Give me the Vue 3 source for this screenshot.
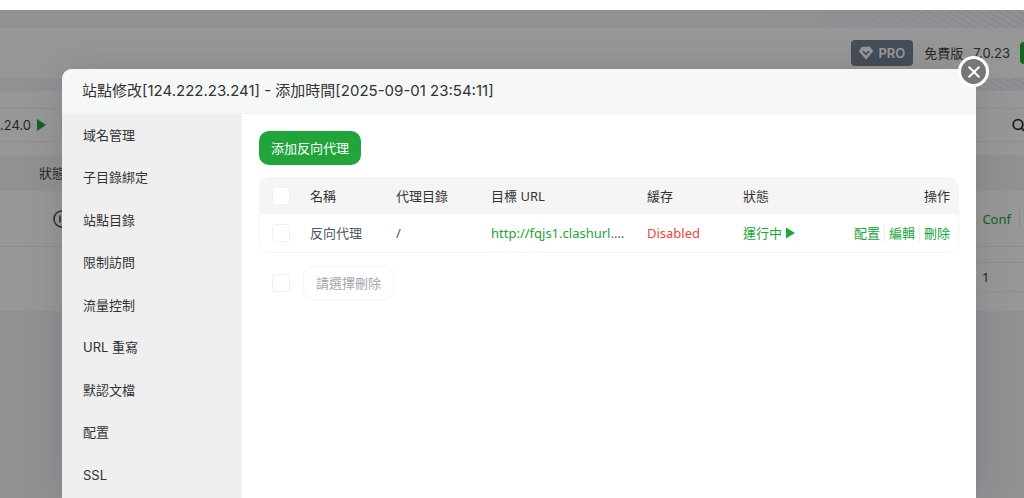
<script setup>
import { ref } from 'vue'

const menu = ['域名管理', '子目錄綁定', '站點目錄', '限制訪問', '流量控制', 'URL 重寫', '默認文檔', '配置', 'SSL']
const rows = ref([
  { name: '反向代理', dir: '/', url: 'http://fqjs1.clashurl.', cache: 'Disabled', state: '運行中', checked: false },
])
const all = ref(false)
const batch = ref(false)
</script>

<template>
  <div class="page">
    <div class="strip"></div>
    <div class="app">
      <header class="topbar">
        <button class="pro" type="button">
          <svg width="14" height="14" viewBox="0 0 14 14" aria-hidden="true">
            <path d="M3.2 1h7.6L14 5.2 7 13.2 0 5.2z" fill="#fff" stroke="#fff" stroke-linejoin="round" stroke-width=".6" />
            <path d="M4.4 5.6l2.6 2.8 2.6-2.8" fill="none" stroke="#768296" stroke-width="1.6" stroke-linecap="round" stroke-linejoin="round" />
          </svg>
          PRO
        </button>
        <span class="edition">免費版</span>
        <span class="version">7.0.23</span>
        <span class="update"></span>
      </header>

      <main class="panel">
        <div class="tools">
          <div class="php">.24.0
            <svg width="9" height="12" viewBox="0 0 9 12" aria-hidden="true"><path d="M0 0l9 6-9 6z" fill="#20a53a" /></svg>
          </div>
          <div class="search">
            <svg width="18" height="14" viewBox="0 0 18 14" aria-hidden="true">
              <circle cx="6" cy="6.5" r="4.8" fill="none" stroke="#333" stroke-width="1.8" />
              <path d="M9.5 10l3.5 3.5" stroke="#333" stroke-width="1.8" />
            </svg>
          </div>
        </div>
        <div class="bg-head">狀態</div>
        <div class="bg-row">
          <svg width="18" height="18" viewBox="0 0 18 18" aria-hidden="true">
            <circle cx="9" cy="9" r="8" fill="none" stroke="#444c5c" stroke-width="1.5" />
            <path d="M7 5.5v7M11 5.5v7" stroke="#444c5c" stroke-width="1.6" />
          </svg>
          <a class="conf" href="#">Conf</a>
        </div>
        <div class="pager"><span class="page-no">1</span></div>
      </main>

      <div class="shade">
        <section class="dialog" role="dialog" aria-labelledby="dialog-title">
          <button class="close" type="button" aria-label="關閉">
            <svg width="12" height="12" viewBox="0 0 12 12" aria-hidden="true">
              <path d="M1.2 1.2l9.6 9.6M10.8 1.2L1.2 10.8" stroke="#fff" stroke-width="2" stroke-linecap="round" />
            </svg>
          </button>
          <h1 id="dialog-title" class="title">站點修改[124.222.23.241] - 添加時間[2025-09-01 23:54:11]</h1>
          <div class="body">
            <nav class="side">
              <a v-for="item in menu" :key="item" href="#">{{ item }}</a>
            </nav>
            <div class="content">
              <button class="add" type="button">添加反向代理</button>
              <div class="table-box">
                <table>
                  <colgroup>
                    <col class="c-check"><col class="c-name"><col class="c-dir"><col class="c-url"><col class="c-cache"><col class="c-state"><col>
                  </colgroup>
                  <thead>
                    <tr>
                      <th><input v-model="all" type="checkbox" aria-label="全選"></th>
                      <th>名稱</th>
                      <th>代理目錄</th>
                      <th>目標 URL</th>
                      <th>緩存</th>
                      <th>狀態</th>
                      <th class="ops">操作</th>
                    </tr>
                  </thead>
                  <tbody>
                    <tr v-for="row in rows" :key="row.name">
                      <td><input v-model="row.checked" type="checkbox" :aria-label="row.name"></td>
                      <td>{{ row.name }}</td>
                      <td>{{ row.dir }}</td>
                      <td><a href="#">{{ row.url }}</a>…</td>
                      <td><a class="off" href="#">{{ row.cache }}</a></td>
                      <td>
                        <a class="run" href="#">{{ row.state }}
                          <svg width="9" height="12" viewBox="0 0 9 12" aria-hidden="true"><path d="M0 .5L9 6l-9 5.5z" fill="#20a53a" /></svg>
                        </a>
                      </td>
                      <td class="ops">
                        <div class="links"><a href="#">配置</a><a href="#">編輯</a><a href="#">刪除</a></div>
                      </td>
                    </tr>
                  </tbody>
                </table>
              </div>
              <div class="batch">
                <input v-model="batch" type="checkbox" aria-label="批量選擇">
                <button class="del" type="button" disabled>請選擇刪除</button>
              </div>
            </div>
          </div>
        </section>
      </div>
    </div>
  </div>
</template>

<style>
body { margin: 0; }
</style>

<style scoped>
* { box-sizing: border-box; }
.page {
  display: flex;
  flex-direction: column;
  height: 100vh;
  overflow: hidden;
  font-family: "Noto Sans", "Noto Sans CJK TC", sans-serif;
  font-size: 13px;
  line-height: 20px;
  color: #444;
}
a { text-decoration: none; color: #20a53a; }
button { font: inherit; border: 0; cursor: pointer; }
.strip { flex: none; height: 10px; background: #fff; }
.app {
  position: relative;
  flex: 1;
  min-height: 0;
  padding-top: 18px;
  background:
    linear-gradient(90deg, #f0f2f5 75%, transparent) 0 0 / 100% 90px no-repeat,
    repeating-linear-gradient(30deg, #e2e4ef 0 1px, #f0f2f5 2px 5px) 0 0 / 100% 90px no-repeat,
    #f0f2f5;
}
.topbar {
  display: flex;
  align-items: center;
  justify-content: flex-end;
  height: 50px;
  background: #fcfcfc;
  font-family: Inter, "Noto Sans CJK TC", sans-serif;
  overflow: hidden;
}
.pro {
  display: flex;
  align-items: center;
  gap: 5px;
  height: 26px;
  padding: 0 8px;
  border-radius: 4px;
  background: #768296;
  color: #fff;
  font-weight: 600;
}
.edition { margin-left: 11px; }
.version { margin: 0 10px; }
.update { width: 4px; height: 22px; border-radius: 8px 0 0 8px; background: #20a53a; }
.panel { margin-top: 13px; background: #fcfcfc; }
.tools { display: flex; justify-content: space-between; height: 64px; padding: 17px 0 13px; }
.php {
  display: flex;
  align-items: center;
  gap: 6px;
  width: 62px;
  border: 1px solid #eee;
  border-left: 0;
  border-radius: 0 10px 10px 0;
  font-family: Inter, sans-serif;
}
.search {
  display: flex;
  align-items: center;
  justify-content: flex-end;
  width: 80px;
  border: solid #eee;
  border-width: 1px 0;
  overflow: hidden;
}
.search svg { flex: none; margin-right: -6px; }
.bg-head { height: 36px; padding: 8px 39px; background: #f2f2f2; }
.bg-row {
  display: flex;
  align-items: center;
  justify-content: space-between;
  height: 56px;
  padding: 0 4px 0 53px;
  border-bottom: 1px solid #eee;
}
.conf { padding-right: 8px; border-right: 1px solid #e6e6e6; }
.pager { display: flex; justify-content: flex-end; padding: 15px 0 19px; }
.page-no { width: 50px; padding: 3px 8px; border: solid #eee; border-width: 1px 0; line-height: 22px; }
.shade {
  position: absolute;
  inset: 0;
  display: flex;
  padding: 59px 48px 0 62px;
  background: rgba(0, 0, 0, .4);
}
.dialog {
  position: relative;
  display: flex;
  flex-direction: column;
  flex: 1;
  border-radius: 10px 10px 0 0;
  background: #fff;
  box-shadow: 0 0 40px rgba(0, 0, 30, .12);
}
.close {
  position: absolute;
  top: -13px;
  right: -13px;
  display: flex;
  align-items: center;
  justify-content: center;
  width: 31px;
  height: 31px;
  padding: 0;
  border: 3px solid #fff;
  border-radius: 50%;
  background: #777;
}
.title {
  margin: 0;
  height: 45px;
  padding: 0 20px;
  border-bottom: 1px solid #f0f0f0;
  border-radius: 10px 10px 0 0;
  background: #f6f8f8;
  font: 400 15px/44px Inter, "Noto Sans CJK TC", sans-serif;
  color: #333;
}
.body { display: flex; flex: 1; min-height: 0; }
.side {
  width: 180px;
  background: #efefef;
  font-family: Inter, "Noto Sans CJK TC", sans-serif;
  overflow: hidden;
}
.side a {
  display: block;
  padding: 0 21px;
  line-height: 42px;
  color: #333;
}
.side a:nth-child(even) { padding-bottom: 1px; }
.content { flex: 1; min-width: 0; padding: 17px 17px 0; }
.add {
  display: block;
  height: 34px;
  padding: 0 12px;
  border-radius: 10px;
  background: #20a53a;
  color: #fff;
}
.table-box { margin-top: 12px; border: 1px solid #f4f4f4; border-radius: 10px; overflow: hidden; }
table { width: 100%; table-layout: fixed; border-collapse: collapse; }
.c-check { width: 42px; }
.c-name { width: 86px; }
.c-dir { width: 95px; }
.c-url { width: 156px; }
.c-cache { width: 96px; }
.c-state { width: 100px; }
th, td { padding: 0 8px; text-align: left; font-weight: 400; white-space: nowrap; }
th { height: 36px; background: #f5f5f5; color: #333; }
td { height: 38px; color: #4b5563; }
th:first-child, td:first-child { padding: 0 0 0 12px; }
th.ops, td.ops { text-align: right; }
input {
  appearance: none;
  display: block;
  width: 18px;
  height: 18px;
  margin: 0;
  border: 1px solid #f1f1f1;
  border-radius: 3px;
  background: #fff;
}
input:checked { background: #20a53a; }
a.off { color: #ef4444; }
.run { display: flex; align-items: center; gap: 4px; }
.links { display: flex; justify-content: flex-end; line-height: 17px; }
.links a + a { margin-left: 4px; padding-left: 4px; border-left: 1px solid #eee; }
.batch { display: flex; align-items: center; gap: 13px; margin-top: 13px; padding-left: 13px; }
.del {
  height: 34px;
  padding: 0 12px;
  border: 1px solid #f5f5f5;
  border-radius: 10px;
  background: #fff;
  color: #a3a6ad;
}
</style>
